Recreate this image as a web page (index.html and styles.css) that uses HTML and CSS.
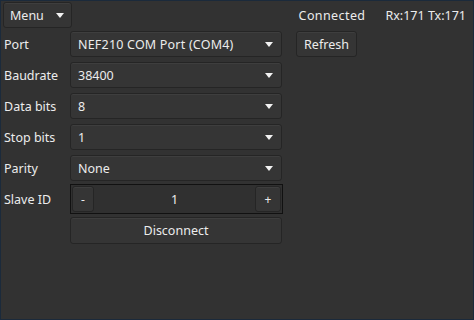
FILE: index.html
```html
<!DOCTYPE html>
<html>
<head>
<meta charset="utf-8">
<link rel="stylesheet" href="styles.css">
</head>
<body>
<div class="window">
  <div class="topbar">
    <button class="btn menu-btn">Menu <span class="tri"></span></button>
    <div class="status">
      <span class="connected">Connected</span>
      <span class="counters">Rx:171 Tx:171</span>
    </div>
  </div>
  <div class="form">
    <div class="label">Port</div>
    <div class="combo"><span class="wide">NEF210 COM Port (COM4)</span><span class="tri"></span></div>
    <button class="btn refresh">Refresh</button>

    <div class="label">Baudrate</div>
    <div class="combo"><span>38400</span><span class="tri"></span></div>
    <div></div>

    <div class="label">Data bits</div>
    <div class="combo"><span>8</span><span class="tri"></span></div>
    <div></div>

    <div class="label">Stop bits</div>
    <div class="combo"><span>1</span><span class="tri"></span></div>
    <div></div>

    <div class="label">Parity</div>
    <div class="combo"><span>None</span><span class="tri"></span></div>
    <div></div>

    <div class="label">Slave ID</div>
    <div class="spin">
      <button class="btn spin-btn">-</button>
      <span class="spin-val">1</span>
      <button class="btn spin-btn plus">+</button>
    </div>
    <div></div>

    <div></div>
    <button class="btn disconnect">Disconnect</button>
    <div></div>
  </div>
</div>
</body>
</html>
```

FILE: styles.css
```css
html, body {
  margin: 0;
  padding: 0;
  background: #323232;
}
.window {
  width: 474px;
  height: 320px;
  box-sizing: border-box;
  border: 1px solid #1b2a3b;
  background: #323232;
  font-family: "Noto Sans", "Open Sans", sans-serif;
  font-size: 12.5px;
  color: #ececec;
  padding: 1px 0 0 2px;
}
.btn {
  font-family: inherit;
  font-size: inherit;
  color: #ececec;
  background: #353535;
  border: 1px solid #252525;
  box-shadow: inset 0 1px 0 #3e3e3e;
  border-radius: 3px;
  padding: 0;
  margin: 0;
  cursor: default;
}
.tri {
  display: inline-block;
  width: 0;
  height: 0;
  border-left: 4.5px solid transparent;
  border-right: 4.5px solid transparent;
  border-top: 5px solid #f2f2f2;
}
.topbar {
  display: flex;
  align-items: center;
  height: 26px;
}
.menu-btn {
  width: 69px;
  height: 26px;
  display: flex;
  align-items: center;
  justify-content: space-between;
  padding: 0 7px 0 6px;
  box-sizing: border-box;
}
.status {
  margin-left: auto;
  display: flex;
  gap: 20px;
  padding-right: 7px;
}
.connected {
  letter-spacing: 0.4px;
}
.form {
  margin-top: 3px;
  display: grid;
  grid-template-columns: 67px 212px 75px;
  column-gap: 0;
  row-gap: 5px;
  grid-auto-rows: 26px;
}
.label {
  display: flex;
  align-items: center;
  padding-left: 1px;
}
.combo {
  display: flex;
  align-items: center;
  justify-content: space-between;
  box-sizing: border-box;
  background: #353535;
  border: 1px solid #252525;
  box-shadow: inset 0 1px 0 #3e3e3e;
  border-radius: 3px;
  padding: 0 8px 0 7px;
}
.wide {
  letter-spacing: 0.2px;
}
.refresh {
  height: 26px;
  width: 61px;
  margin-left: 14px;
}
.spin {
  display: flex;
  align-items: center;
  box-sizing: border-box;
  border: 1px solid #111;
  height: 30px;
  margin-top: -2px;
  width: 213px;
  padding: 1px;
  background: #303030;
}
.spin-btn {
  width: 22px;
  height: 26px;
  font-size: 12px;
}
.plus {
  width: 26px;
}
.spin-val {
  flex: 1;
  text-align: center;
}
.disconnect {
  height: 27px;
}
```
